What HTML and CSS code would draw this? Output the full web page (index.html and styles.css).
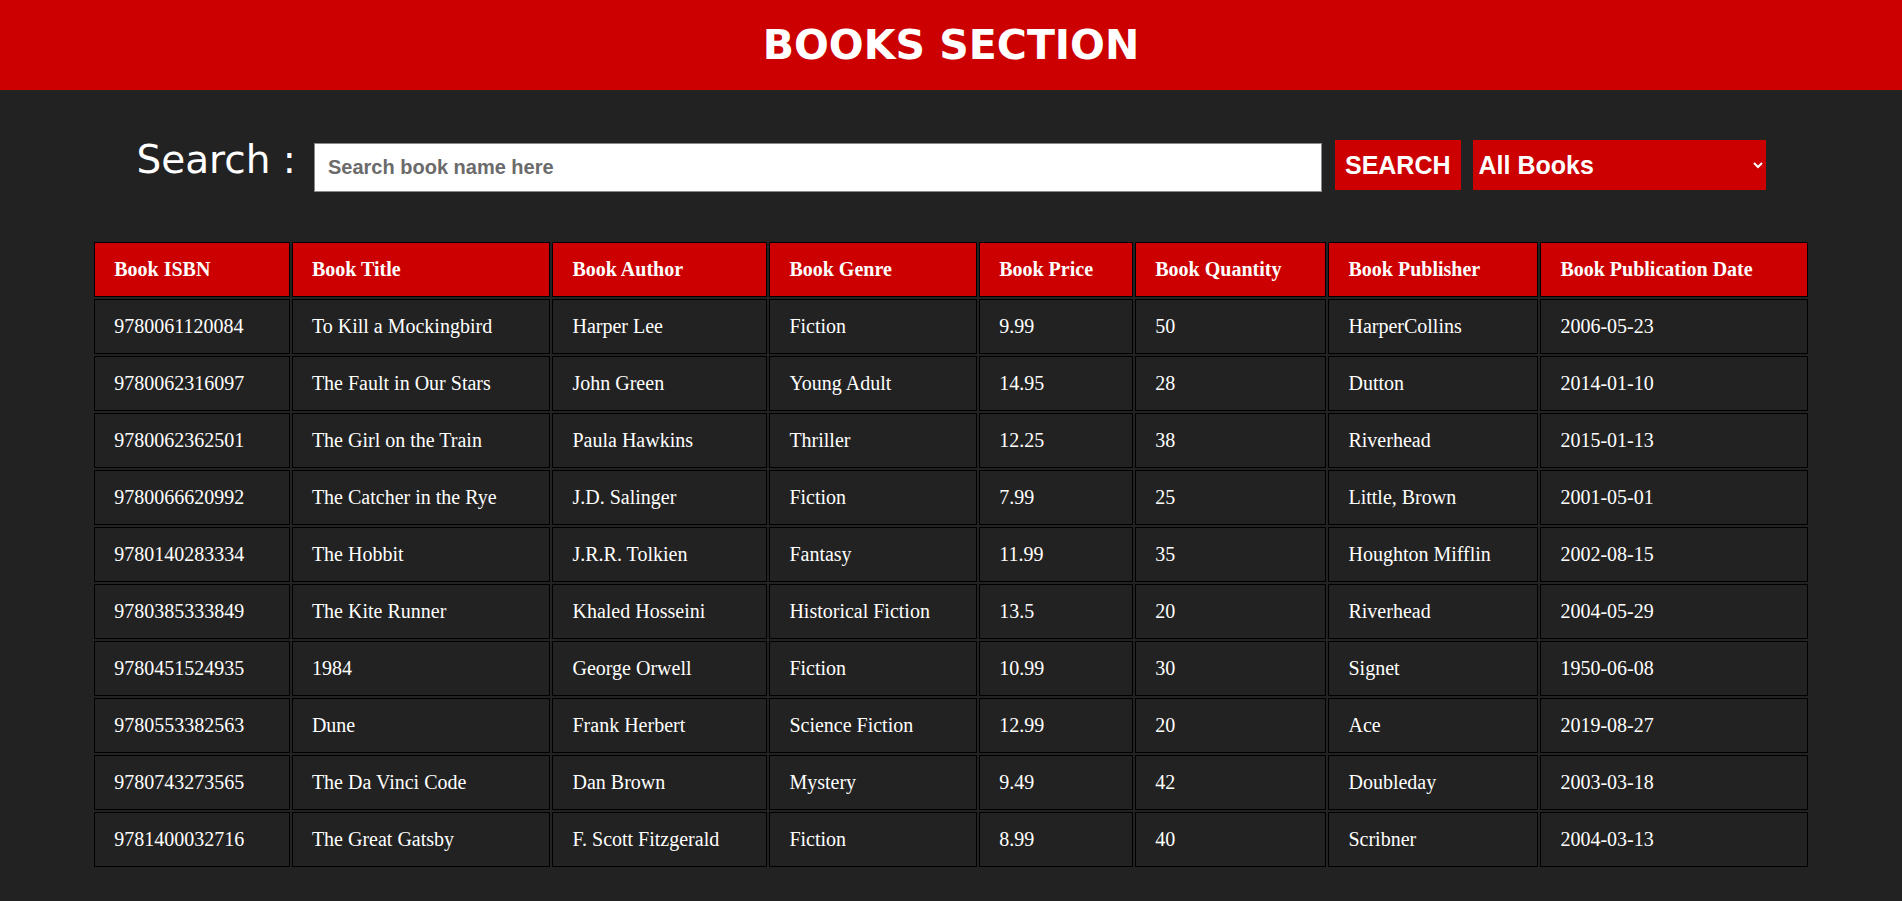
FILE: index.html
```html
<!DOCTYPE html>
<html lang="en">
<head>
<meta charset="utf-8">
<title>Books Section</title>
<link rel="stylesheet" href="styles.css">
</head>
<body>
<header class="top-bar">
  <h1 class="page-title">BOOKS SECTION</h1>
</header>
<main class="content">
  <form class="search-row" onsubmit="return false;">
    <label class="search-label" for="q">Search :</label>
    <input class="search-input" id="q" type="text" placeholder="Search book name here">
    <button class="search-btn" type="submit">SEARCH</button>
    <select class="filter-select">
      <option>All Books</option>
      <option>Fiction</option>
      <option>Fantasy</option>
      <option>Thriller</option>
    </select>
  </form>
  <table class="books-table">
    <thead>
      <tr>
        <th>Book ISBN</th>
        <th>Book Title</th>
        <th>Book Author</th>
        <th>Book Genre</th>
        <th>Book Price</th>
        <th>Book Quantity</th>
        <th>Book Publisher</th>
        <th>Book Publication Date</th>
      </tr>
    </thead>
    <tbody>
      <tr><td>9780061120084</td><td>To Kill a Mockingbird</td><td>Harper Lee</td><td>Fiction</td><td>9.99</td><td>50</td><td>HarperCollins</td><td>2006-05-23</td></tr>
      <tr><td>9780062316097</td><td>The Fault in Our Stars</td><td>John Green</td><td>Young Adult</td><td>14.95</td><td>28</td><td>Dutton</td><td>2014-01-10</td></tr>
      <tr><td>9780062362501</td><td>The Girl on the Train</td><td>Paula Hawkins</td><td>Thriller</td><td>12.25</td><td>38</td><td>Riverhead</td><td>2015-01-13</td></tr>
      <tr><td>9780066620992</td><td>The Catcher in the Rye</td><td>J.D. Salinger</td><td>Fiction</td><td>7.99</td><td>25</td><td>Little, Brown</td><td>2001-05-01</td></tr>
      <tr><td>9780140283334</td><td>The Hobbit</td><td>J.R.R. Tolkien</td><td>Fantasy</td><td>11.99</td><td>35</td><td>Houghton Mifflin</td><td>2002-08-15</td></tr>
      <tr><td>9780385333849</td><td>The Kite Runner</td><td>Khaled Hosseini</td><td>Historical Fiction</td><td>13.5</td><td>20</td><td>Riverhead</td><td>2004-05-29</td></tr>
      <tr><td>9780451524935</td><td>1984</td><td>George Orwell</td><td>Fiction</td><td>10.99</td><td>30</td><td>Signet</td><td>1950-06-08</td></tr>
      <tr><td>9780553382563</td><td>Dune</td><td>Frank Herbert</td><td>Science Fiction</td><td>12.99</td><td>20</td><td>Ace</td><td>2019-08-27</td></tr>
      <tr><td>9780743273565</td><td>The Da Vinci Code</td><td>Dan Brown</td><td>Mystery</td><td>9.49</td><td>42</td><td>Doubleday</td><td>2003-03-18</td></tr>
      <tr><td>9781400032716</td><td>The Great Gatsby</td><td>F. Scott Fitzgerald</td><td>Fiction</td><td>8.99</td><td>40</td><td>Scribner</td><td>2004-03-13</td></tr>
    </tbody>
  </table>
</main>
</body>
</html>
```

FILE: styles.css
```css
html, body {
  margin: 0;
  padding: 0;
}

body {
  background: #222222;
  color: #ffffff;
  font-family: "Liberation Serif", "Times New Roman", serif;
}

.top-bar {
  background: #cc0000;
  height: 90px;
  display: flex;
  align-items: center;
  justify-content: center;
}

.page-title {
  margin: 0;
  font-family: "DejaVu Sans", Verdana, sans-serif;
  font-weight: bold;
  font-size: 41px;
  color: #ffffff;
}

.content {
  padding-top: 50px;
}

.search-row {
  display: flex;
  justify-content: center;
  align-items: flex-start;
  margin: 0;
}

.search-label {
  font-family: "DejaVu Sans", Verdana, sans-serif;
  font-size: 39px;
  line-height: 44px;
  margin-top: -2px;
  margin-right: 18px;
  color: #ffffff;
}

.search-input {
  box-sizing: border-box;
  width: 1008px;
  height: 49px;
  margin-top: 3px;
  padding: 0 13px;
  border: 1px solid #8a8a8a;
  background: #ffffff;
  font-family: "Liberation Sans", Arial, sans-serif;
  font-weight: bold;
  font-size: 20px;
  color: #333333;
  outline: none;
}

.search-input::placeholder {
  color: #6b6b6b;
}

.search-btn {
  box-sizing: border-box;
  height: 50px;
  margin-left: 13px;
  padding: 0 10px;
  border: none;
  background: #cc0000;
  color: #ffffff;
  font-family: "Liberation Sans", Arial, sans-serif;
  font-weight: bold;
  font-size: 25px;
  cursor: pointer;
}

.filter-select {
  box-sizing: border-box;
  width: 293px;
  height: 50px;
  margin-left: 12px;
  padding: 0 2px;
  border: none;
  background: #cc0000;
  color: #ffffff;
  font-family: "Liberation Sans", Arial, sans-serif;
  font-weight: bold;
  font-size: 25px;
  outline: none;
}

.books-table {
  width: 90.3%;
  margin: 48px auto 30px;
  border-collapse: separate;
  border-spacing: 2px;
  font-size: 20px;
}

.books-table th,
.books-table td {
  border: 1px solid #000000;
  padding: 15px 19px;
  text-align: left;
  line-height: 23px;
  white-space: nowrap;
}

.books-table th {
  background: #cc0000;
  color: #ffffff;
  font-weight: bold;
}

.books-table td {
  background: #222222;
  color: #ffffff;
  font-weight: normal;
}
```
